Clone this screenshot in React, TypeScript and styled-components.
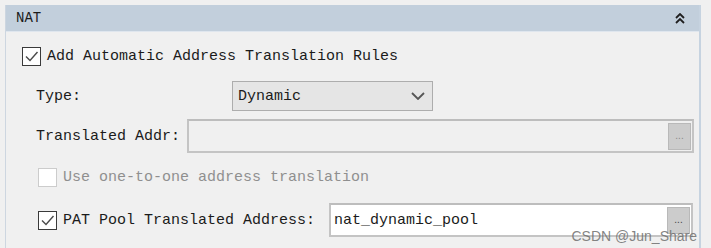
import React from 'react';
import styled, { createGlobalStyle } from 'styled-components';

const GlobalStyle = createGlobalStyle`
    body {
        margin: 0;
        background-color: #f0f0f0;
        font-family: "Liberation Mono", "DejaVu Sans Mono", monospace;
        color: #1b1b1b;
    }
`;

const Page = styled.div`
    position: relative;
    width: 711px;
    height: 248px;
    overflow: hidden;
    padding: 5px 0 0 5px;
    box-sizing: border-box;
`;

const Panel = styled.div`
    width: 696px;
    height: 260px;
    box-sizing: border-box;
    border-left: 1px solid #cdd6e0;
    border-right: 2px solid #c6d3e0;
    background-color: #f0f0f0;
`;

const Header = styled.div`
    height: 27px;
    box-sizing: border-box;
    background-color: #c2cfdc;
    border-bottom: 1px solid #dfe6ee;
    display: flex;
    align-items: center;
    justify-content: space-between;
    padding: 0 14px 0 10px;
    font-size: 14px;
`;

const Body = styled.div`
    padding: 15px 0 0 16px;
    font-size: 15px;
`;

const Row = styled.div<{ $top?: number; $indent?: number }>`
    display: flex;
    align-items: center;
    margin-top: ${p => p.$top ?? 0}px;
    margin-left: ${p => p.$indent ?? 0}px;
`;

const Box = styled.span<{ $disabled?: boolean }>`
    width: 19px;
    height: 19px;
    box-sizing: border-box;
    border: 1px solid ${p => (p.$disabled ? '#cccccc' : '#3a3a3a')};
    background-color: #ffffff;
    display: flex;
    align-items: center;
    justify-content: center;
    margin-right: 6px;
    flex-shrink: 0;
`;

const Text = styled.span<{ $disabled?: boolean }>`
    white-space: pre;
    color: ${p => (p.$disabled ? '#8f8f8f' : '#1b1b1b')};
`;

const Label = styled.span<{ $width: number }>`
    width: ${p => p.$width}px;
    white-space: pre;
    flex-shrink: 0;
`;

const Select = styled.div`
    width: 201px;
    height: 30px;
    box-sizing: border-box;
    border: 1px solid #adadad;
    background-color: #e5e5e5;
    display: flex;
    align-items: center;
    justify-content: space-between;
    padding: 0 7px 0 5px;
`;

const Field = styled.div<{ $width: number; $white?: boolean }>`
    width: ${p => p.$width}px;
    height: 34px;
    box-sizing: border-box;
    border: 2px solid #c4c4c4;
    border-top-color: #bdbdbd;
    background-color: ${p => (p.$white ? '#ffffff' : '#f0f0f0')};
    display: flex;
    align-items: center;
    justify-content: space-between;
    padding: 0 1px 0 3px;
`;

const Dots = styled.span<{ $dark?: boolean }>`
    width: 23px;
    height: 27px;
    box-sizing: border-box;
    border: 1px solid #b9b9b9;
    background-color: #cccccc;
    color: ${p => (p.$dark ? '#444444' : '#8a8a8a')};
    font-family: "Liberation Sans", Arial, sans-serif;
    font-size: 10px;
    display: flex;
    align-items: center;
    justify-content: center;
    padding-bottom: 2px;
`;

const Watermark = styled.div`
    position: absolute;
    right: 14px;
    bottom: 4px;
    font-family: "Liberation Sans", Arial, sans-serif;
    font-size: 14px;
    color: rgba(110, 110, 110, 0.85);
    white-space: nowrap;
`;

const Check = () => (
    <svg width="15" height="15" viewBox="0 0 15 15">
        <path d="M2 7.5 L6 11.5 L13.5 3" fill="none" stroke="#4a4a4a" strokeWidth="1.4" />
    </svg>
);

const Chevron = () => (
    <svg width="14" height="8" viewBox="0 0 14 8">
        <path d="M1 1 L7 7 L13 1" fill="none" stroke="#555555" strokeWidth="1.8" />
    </svg>
);

const Collapse = () => (
    <svg width="10" height="11" viewBox="0 0 10 11">
        <path d="M1 5 L5 1 L9 5 M1 10 L5 6 L9 10" fill="none" stroke="#1f1f1f" strokeWidth="1.8" />
    </svg>
);

const App = () => {
    return (
        <Page>
            <GlobalStyle />
            <Panel>
                <Header>
                    <span>NAT</span>
                    <Collapse />
                </Header>
                <Body>
                    <Row>
                        <Box><Check /></Box>
                        <Text>Add Automatic Address Translation Rules</Text>
                    </Row>
                    <Row $top={15} $indent={14}>
                        <Label $width={196}>Type:</Label>
                        <Select>
                            <span>Dynamic</span>
                            <Chevron />
                        </Select>
                    </Row>
                    <Row $top={8} $indent={14}>
                        <Label $width={151}>Translated Addr:</Label>
                        <Field $width={507}>
                            <span />
                            <Dots>...</Dots>
                        </Field>
                    </Row>
                    <Row $top={15} $indent={16}>
                        <Box $disabled />
                        <Text $disabled>Use one-to-one address translation</Text>
                    </Row>
                    <Row $top={16} $indent={16}>
                        <Box><Check /></Box>
                        <Label $width={266}>PAT Pool Translated Address:</Label>
                        <Field $width={364} $white>
                            <span>nat_dynamic_pool</span>
                            <Dots $dark>...</Dots>
                        </Field>
                    </Row>
                </Body>
            </Panel>
            <Watermark>CSDN @Jun_Share</Watermark>
        </Page>
    );
};

export default App;
